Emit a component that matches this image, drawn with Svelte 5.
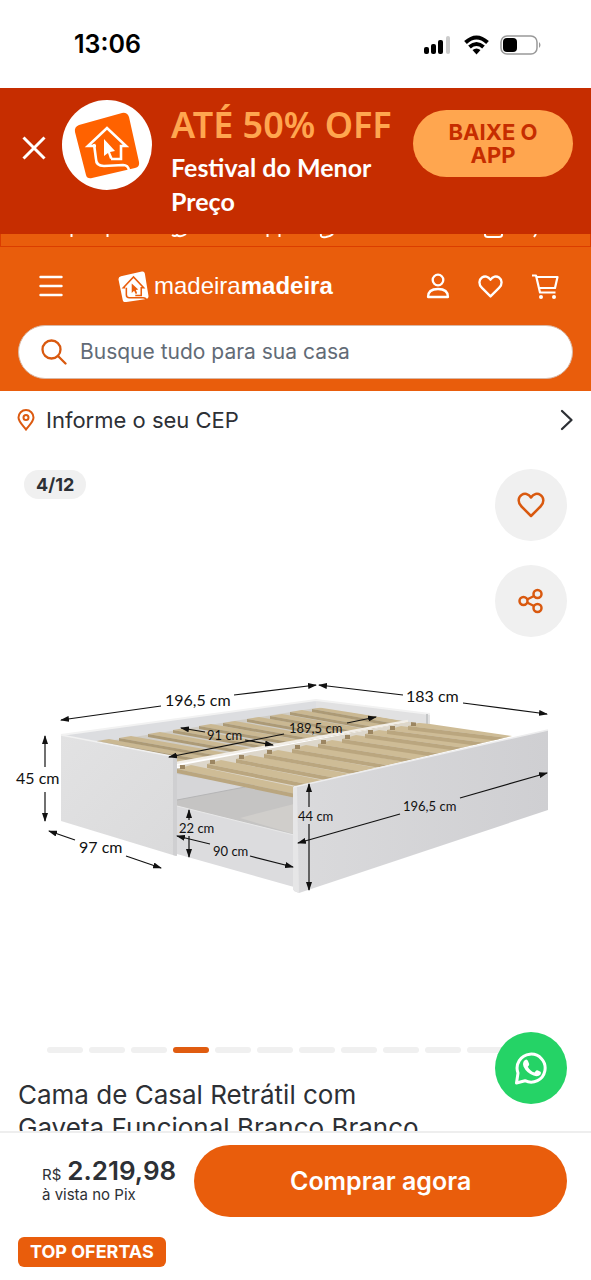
<script>
  const slides = Array.from({ length: 12 }, (_, i) => i + 1);
  const current = 4;

  // Slats of the fixed bed: the far end of each one along the back rail
  const upper = [
    [75, 744], [97, 741], [119, 738], [148, 734], [173, 730], [199, 726],
    [223, 723], [247, 719], [270, 716], [290, 712], [312, 709]
  ].map(([x, y]) => ({
    top: `${x},${y} ${x + 12},${y - 2} ${x + 152},${y + 23} ${x + 140},${y + 25}`,
    side: `${x},${y} ${x + 140},${y + 25} ${x + 140},${y + 28} ${x},${y + 3}`
  }));

  // Slats of the pull-out bed: start on the middle rail and slope
  const lower = [
    [177, 769, 0.21], [207, 764, 0.2], [236, 759, 0.19], [264, 754, 0.18], [292, 749, 0.17],
    [318, 744, 0.16], [342, 739, 0.15], [365, 734, 0.14], [387, 730, 0.13], [408, 726, 0.12]
  ].map(([x, y, s]) => ({
    x, y,
    top: `${x},${y} ${x + 14},${y - 4} ${x + 164},${y - 4 + 150 * s} ${x + 150},${y + 150 * s}`,
    side: `${x},${y} ${x + 150},${y + 150 * s} ${x + 150},${y + 4 + 150 * s} ${x},${y + 4}`
  }));

  const arrows = [
    [161, 706, 61, 720], [234, 695, 316, 685], [403, 695, 319, 685], [463, 703, 547, 714],
    [45, 767, 45, 736], [45, 792, 45, 821], [75, 840, 49, 831], [126, 856, 161, 868],
    [205, 732, 181, 728], [245, 740, 273, 745], [284, 734, 169, 757], [347, 723, 376, 717],
    [189, 820, 189, 810], [189, 836, 189, 857], [210, 844, 177, 836], [250, 856, 293, 867],
    [309, 807, 309, 784], [309, 824, 309, 890], [400, 814, 298, 843], [460, 798, 547, 773]
  ];

  const labels = [
    [165, 706, '196,5 cm', 1], [406, 702, '183 cm', 1], [16, 784, '45 cm', 1], [79, 853, '97 cm', 1],
    [207, 740, '91 cm', 0], [289, 733, '189,5 cm', 0], [179, 833, '22 cm', 0], [213, 856, '90 cm', 0],
    [298, 821, '44 cm', 0], [403, 811, '196,5 cm', 0]
  ];
</script>

{#snippet heart()}
  <path d="M15 26 L5.5 16.5 C1.5 12.5 2 7.5 5.500 5 C8.500 3 12.500 3.500 15 7.500 C17.500 3.500 21.500 3 24.500 5 C28 7.500 28.500 12.500 24.500 16.500 Z" />
{/snippet}

{#snippet house()}
  <path d="M12 28 L9 28 L26 10 L43 28 L39 28 L39 41 L29 41" />
  <path d="M14 28 L14 40 Q14 45 19 45 L42 45 Q47 45 48 49" />
{/snippet}

<main class="page">
  <div class="status">
    <span class="clock">13:06</span>
    <svg width="120" height="24" viewBox="0 0 120 24" aria-hidden="true">
      <rect x="1" y="15" width="5" height="7" rx="2" />
      <rect x="8" y="12" width="5" height="10" rx="2" />
      <rect x="15" y="8" width="5" height="14" rx="2" />
      <rect x="23" y="4" width="4" height="18" rx="2" fill="#ccc" />
      <g fill="none" stroke="#000" stroke-width="4">
        <path d="M42.500 10.500 Q53.500 0.500 64.500 10.500" />
        <path d="M46.500 15 Q53.500 9 60.500 15" />
      </g>
      <path d="M49.500 18 Q53.500 15 57.500 18 L53.500 22.500 Z" />
      <rect x="78" y="4" width="36" height="18" rx="6" fill="none" stroke="#999" stroke-width="1.500" />
      <rect x="80" y="6" width="14" height="14" rx="4" />
      <path d="M116 10 Q119 13 116 16 Z" fill="#999" />
    </svg>
  </div>

  <aside class="banner">
    <button class="plain" aria-label="Fechar">
      <svg width="26" height="26" viewBox="0 0 26 26" fill="none" stroke="#fff" stroke-width="3">
        <path d="M2.500 2.500 L23.500 23.500 M23.500 2.500 L2.500 23.500" />
      </svg>
    </button>
    <svg class="badge" width="90" height="90" viewBox="0 0 90 90" aria-hidden="true">
      <circle cx="45" cy="45" r="45" fill="#fff" />
      <path d="M17 25 L60 13 Q65 12 67 17 L77 62 Q78 67 73 68 L30 78 Q25 79 24 75 L13 32 Q12 27 17 25 Z" fill="#ff6200" />
      <path d="M34 46 L26 46 L45 28 L64 46 L59 46 L59 59 L49 59" fill="none" stroke="#fff" stroke-width="2.600" />
      <path d="M32 44 L34 59 Q34 66 42 66 L61 65 Q66 65 67 70" fill="none" stroke="#fff" stroke-width="2.600" />
      <path d="M42 39 L42 56 L46 53 L48 59 L50.500 58 L48 52 L53 51 Z" fill="#fff" />
    </svg>
    <div class="promo">
      <strong>ATÉ 50% OFF</strong>
      <p>Festival do Menor Preço</p>
    </div>
    <button class="download">BAIXE O APP</button>
  </aside>

  <header>
    <div class="peek">
      <svg width="591" height="6" viewBox="0 0 591 6" fill="none" stroke="#fff" stroke-width="2" aria-hidden="true">
        <path d="M70.500 0 V3 M106.500 0 V3 M266.500 0 V3 M278.500 0 V3 M171 1 Q174 3 176 1 Q179 4 185 0 M320 0 Q319 4 325 3 Q330 2 332 0 M484 0 V1 Q484 3 487 3 H498 Q501 3 501 1 V0 M535 0 L533 3" />
      </svg>
    </div>
    <nav>
      <button class="plain menu" aria-label="Menu">
        <svg width="24" height="22" viewBox="0 0 24 22" stroke="#fff" stroke-width="2.400" stroke-linecap="round">
          <path d="M1.500 2 H22.500 M1.500 11 H22.500 M1.500 20 H22.500" />
        </svg>
      </button>
      <a class="brand" href="#inicio">
        <svg width="31" height="31" viewBox="0 0 52 52" aria-hidden="true">
          <path d="M5 9 L40 1 Q44 0 45 4 L51 41 Q52 46 48 47 L14 52 Q9 53 8 49 L1 15 Q0 10 5 9 Z" fill="#fff" />
          <g fill="none" stroke="#e95d0c" stroke-width="2.600">{@render house()}</g>
          <path d="M23 21 L23 37 L27 33 L30 39 L32 37 L30 32 L34 31 Z" fill="#e95d0c" />
        </svg>
        <span>madeira<b>madeira</b></span>
      </a>
      <div class="actions">
        <button class="plain" aria-label="Minha conta">
          <svg width="24" height="28" viewBox="0 0 24 28" fill="none" stroke="#fff" stroke-width="2.300" stroke-linejoin="round">
            <circle cx="12" cy="8" r="5.300" />
            <path d="M2 25 C2 19 6 17 12 17 C18 17 22 19 22 25 Z" />
          </svg>
        </button>
        <button class="plain" aria-label="Favoritos">
          <svg width="27" height="27" viewBox="0 0 30 30" fill="none" stroke="#fff" stroke-width="2.600" stroke-linejoin="round">{@render heart()}</svg>
        </button>
        <button class="plain" aria-label="Carrinho">
          <svg width="28" height="28" viewBox="0 0 28 28" fill="none" stroke="#fff" stroke-width="2.200" stroke-linejoin="round">
            <path d="M1 3.500 H5 L9 20.500 H24.500 M5.500 5 H26.500 L24 16 H8" />
            <circle cx="10" cy="25" r="2" fill="#fff" stroke="none" />
            <circle cx="23" cy="25" r="2" fill="#fff" stroke="none" />
          </svg>
        </button>
      </div>
    </nav>
    <label class="search">
      <svg width="26" height="26" viewBox="0 0 26 26" fill="none" stroke="#d9590f" stroke-width="2.300" stroke-linecap="round">
        <circle cx="10.500" cy="10.500" r="9" />
        <path d="M17 17 L24.500 24.500" />
      </svg>
      <input type="search" aria-label="Busca" placeholder="Busque tudo para sua casa" />
    </label>
  </header>

  <button class="cep">
    <svg width="18" height="22" viewBox="0 0 18 22" fill="none" stroke="#dc5a10" stroke-width="2">
      <path d="M9 20.500 C7 17.500 1.500 13 1.500 8.500 A7.500 7.500 0 0 1 16.500 8.500 C16.500 13 11 17.500 9 20.500 Z" />
      <circle cx="9" cy="8.500" r="2.500" />
    </svg>
    <span>Informe o seu CEP</span>
    <svg width="14" height="22" viewBox="0 0 14 22" fill="none" stroke="#2d3035" stroke-width="2.300" stroke-linecap="round" stroke-linejoin="round">
      <path d="M2 2 L11.500 11 L2 20" />
    </svg>
  </button>

  <section class="gallery">
    <svg class="photo" viewBox="0 449 591 582" role="img" aria-label="Medidas da cama">
      <defs>
        <linearGradient id="side" x1="0" y1="0" x2="1" y2="1">
          <stop offset="0" stop-color="#e2e2e3" /><stop offset="1" stop-color="#dadadb" />
        </linearGradient>
        <linearGradient id="front" x1="0" y1="0" x2="1" y2="0">
          <stop offset="0" stop-color="#dadadc" /><stop offset="1" stop-color="#cfcfd2" />
        </linearGradient>
        <clipPath id="upperArea"><polygon points="70,738 97,740 119,736 316,707 412,722 176,763 140,752" /></clipPath>
        <clipPath id="lowerArea"><polygon points="177,765 410,722 430,724 512,736 294,787 294,798 177,776" /></clipPath>
        <marker id="tip" viewBox="0 0 9 6" refX="8" refY="3" markerWidth="9" markerHeight="6" markerUnits="userSpaceOnUse" orient="auto">
          <path d="M0 0 L9 3 L0 6 Z" fill="#111" />
        </marker>
      </defs>
      <polygon points="61,735 316,700 430,714 430,726 316,715 176,763" fill="#dededf" />
      <polygon points="61,735 316,700 316,709 90,744" fill="#dcdde0" />
      <polygon points="316,700 430,714 430,726 400,722 316,708" fill="#e1e1e2" />
      <path d="M61 735 L316 700 L430 714" fill="none" stroke="#f2f2f2" stroke-width="2" />
      <path d="M427 714 V724" stroke="#c5c7c8" stroke-width="2" />
      <polygon points="90,744 316,708 410,722 176,763" fill="#d0cdc6" />
      <g clip-path="url(#upperArea)">
        {#each upper as slat}
          <polygon points={slat.top} fill="#cab892" />
          <polygon points={slat.side} fill="#ac9a76" />
        {/each}
      </g>
      <polygon points="177,768 294,787 294,836 177,808" fill="#c8c9cb" />
      <polygon points="177,774 245,785 245,788 177,800" fill="#d6d6d8" />
      <polygon points="177,800 245,787 294,796 294,834 177,806" fill="#c5c4c3" />
      <polygon points="240,818 294,804 294,834" fill="#d0cecb" />
      <path d="M177 800 L245 787" stroke="#b5b5b6" />
      <polygon points="177,766 410,722 508,737 294,787" fill="#ddd7cb" />
      <g clip-path="url(#lowerArea)">
        {#each lower as slat}
          <polygon points={slat.top} fill="#cebc96" />
          <polygon points={slat.side} fill="#baa67f" />
          <rect x={slat.x + 3} y={slat.y - 4} width="5" height="4" fill="#9c8662" />
        {/each}
      </g>
      <path d="M176 763 L408 721" stroke="#f2eee7" stroke-width="2.500" />
      <polygon points="61,735 176,757 176,856 61,821" fill="url(#side)" />
      <polygon points="173,757 177,757 177,856 173,855" fill="#cfcfd1" />
      <path d="M61 735 L176 757" stroke="#f1f1f1" stroke-width="1.500" />
      <polygon points="177,806 294,835 294,887 177,854" fill="#dcdcde" />
      <path d="M177 806 L294 835" stroke="#e8e8e8" />
      <polygon points="294,787 548,730 548,810 299,893 294,891" fill="url(#front)" />
      <polygon points="293,787 297,787 299,893 293,890" fill="#e6e6e7" />
      <path d="M294 787 L548 730" stroke="#ededee" stroke-width="1.500" />
      {#each arrows as [x1, y1, x2, y2]}
        <line {x1} {y1} {x2} {y2} stroke="#111" stroke-width="1.200" marker-end="url(#tip)" />
      {/each}
      {#each labels as [x, y, text, big]}
        <text {x} {y} class:big>{text}</text>
      {/each}
    </svg>
    <span class="count">4/12</span>
    <div class="tools">
      <button class="round" aria-label="Favoritar">
        <svg width="30" height="30" viewBox="0 0 30 30" fill="none" stroke="#d9590f" stroke-width="2.500" stroke-linejoin="round">{@render heart()}</svg>
      </button>
      <button class="round" aria-label="Compartilhar">
        <svg width="26" height="26" viewBox="0 0 26 26" fill="none" stroke="#d9590f" stroke-width="2.500">
          <circle cx="5.500" cy="13" r="4" /><circle cx="19.500" cy="6" r="4" /><circle cx="19.500" cy="20" r="4" />
          <path d="M9 11.500 L16 8 M9 14.500 L16 18" />
        </svg>
      </button>
    </div>
    <div class="dots">
      {#each slides as n}
        <i class:on={n === current}></i>
      {/each}
    </div>
    <button class="round whats" aria-label="WhatsApp">
      <svg width="34" height="36" viewBox="0 0 34 36">
        <path d="M2.500 33 L4 23 A14 14 0 1 1 11 30.700 Z" fill="none" stroke="#fff" stroke-width="3" stroke-linejoin="round" />
        <path d="M11 10 Q13 8.500 14 11 L15.200 14 Q15.500 15 13.800 16.700 Q16 21 20.500 22.500 L22.200 20.600 Q23 20 24 20.500 L26.500 21.800 Q27.500 22.500 26.500 24.500 Q24 27.500 19.500 25.500 Q12.500 23 9.500 16.500 Q8 12.500 11 10 Z" fill="#fff" />
      </svg>
    </button>
  </section>

  <h1>Cama de Casal Retrátil com Gaveta Funcional Branco Branco</h1>

  <footer>
    <div class="buy">
      <div class="price">
        <div><small>R$</small><strong>2.219,98</strong></div>
        <span>à vista no Pix</span>
      </div>
      <button class="cta">Comprar agora</button>
    </div>
    <span class="tag">TOP OFERTAS</span>
  </footer>
</main>

<style>
  :global(body) { background: #fff; }
  .page { font-family: Inter, sans-serif; color: #2d3035; }
  .page * { box-sizing: border-box; }
  svg { display: block; flex: none; }
  button { font: inherit; color: inherit; border: 0; cursor: pointer; }
  .plain { padding: 0; background: none; }

  .status { display: flex; justify-content: space-between; align-items: center; height: 88px; padding: 0 48px 0 74px; color: #000; }
  .clock { font-size: 25px; font-weight: 600; line-height: 32px; }

  .banner { display: flex; align-items: flex-start; height: 146px; padding: 12px 18px 0 21px; background: #c62d00; color: #fff; }
  .banner .plain { margin: 35px 15px 0 0; }
  .promo { flex: 1; margin-left: 19px; }
  .promo strong { display: block; font: 600 36px/50px "Noto Sans", sans-serif; color: #ffa64f; white-space: nowrap; }
  .promo p { margin: 0; font: 700 25px/34px Lato, sans-serif; max-width: 220px; }
  .download { width: 160px; height: 67px; margin-top: 10px; padding: 0 24px; border-radius: 34px; background: #ffa64f; color: #c62d00; font-size: 22px; font-weight: 700; line-height: 23px; }

  header { background: #e95d0c; padding-bottom: 12px; }
  .peek { height: 13px; overflow: hidden; border: 1px solid #db3d00; border-top: 0; }
  nav { display: flex; align-items: center; height: 78px; padding: 0 32px 0 39px; }
  .brand { display: flex; align-items: center; gap: 5px; margin-left: 55px; color: #fff; text-decoration: none; font: 24px/32px "Liberation Sans", sans-serif; }
  .actions { display: flex; align-items: center; gap: 27px; margin-left: auto; }
  .search { display: flex; align-items: center; gap: 13px; height: 54px; margin: 0 18px; padding: 0 22px; border: 1px solid #d9b8a5; border-radius: 27px; background: #fff; }
  .search input { flex: 1; min-width: 0; border: 0; outline: 0; padding: 0; background: none; font: 21px/28px Inter, sans-serif; }
  .search input::placeholder { color: #626b76; opacity: 1; }

  .cep { display: flex; align-items: center; gap: 11px; width: 100%; height: 58px; padding: 0 17px; background: none; text-align: left; font-size: 22px; line-height: 28px; }
  .cep span { flex: 1; }

  .gallery { position: relative; }
  .photo { width: 100%; height: auto; }
  .photo text { font: 13px Lato, sans-serif; fill: #111; }
  .photo text.big { font-size: 16px; }
  .count { position: absolute; left: 24px; top: 21px; padding: 0 12px; border-radius: 15px; background: #f0f0f0; font-size: 18px; font-weight: 700; line-height: 29px; }
  .tools { position: absolute; right: 24px; top: 20px; display: grid; gap: 24px; }
  .round { display: grid; place-items: center; width: 72px; height: 72px; padding: 0; border-radius: 50%; background: #f0f0f0; }
  .whats { position: absolute; right: 24px; bottom: -42px; background: #25d366; }
  .dots { display: flex; justify-content: center; gap: 6px; padding: 16px 0 9px; }
  .dots i { width: 36px; height: 6px; border-radius: 3px; background: #f0f0f0; }
  .dots i.on { background: #e05c10; }

  h1 { height: 53px; margin: 16px 164px 0 18px; overflow: hidden; font-size: 26px; font-weight: 400; line-height: 33px; }

  footer { border-top: 2px solid #eee; padding: 12px 24px 13px 18px; }
  .buy { display: flex; align-items: center; justify-content: space-between; padding-left: 24px; }
  .price { font-size: 15px; line-height: 16px; }
  .price div { display: flex; align-items: baseline; gap: 6px; line-height: 24px; white-space: nowrap; }
  .price small { font-size: 15px; }
  .price strong { font-size: 26px; font-weight: 600; }
  .price span { display: block; }
  .cta { flex: none; width: 71%; height: 72px; border-radius: 36px; background: #e95d0c; color: #fff; font-size: 25px; font-weight: 600; }
  .tag { display: inline-block; margin-top: 20px; padding: 0 12px; border-radius: 6px; background: #e95d0c; color: #fff; font-size: 18px; font-weight: 700; line-height: 30px; }
</style>
